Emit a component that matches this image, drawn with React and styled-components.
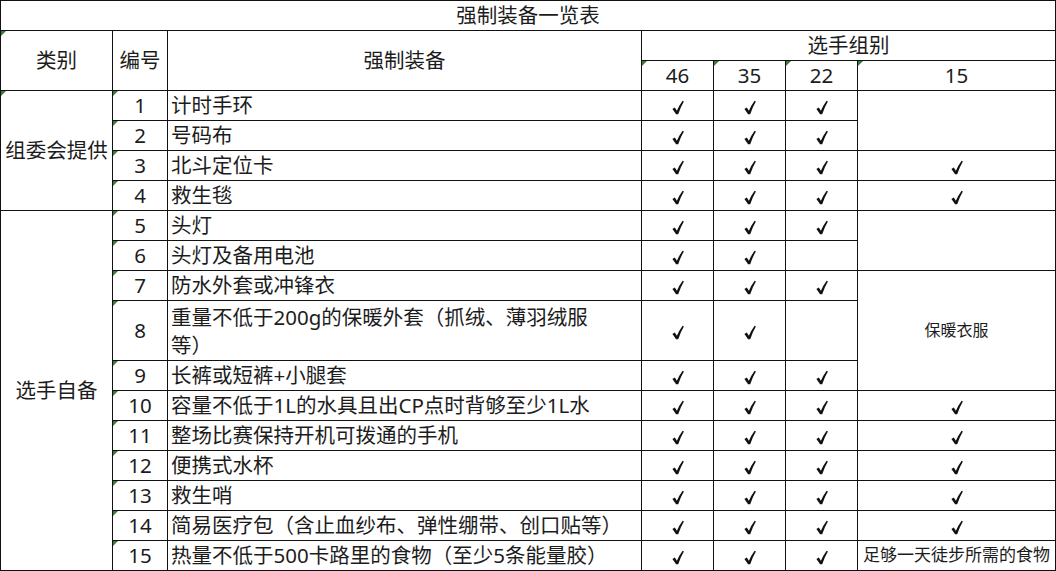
import React from "react";
import styled, { createGlobalStyle } from "styled-components";

const GlobalStyle = createGlobalStyle`
  body {
    margin: 0;
    background: #fff;
  }
`;

const rows = [
  { n: 1, name: "计时手环", c: [1, 1, 1], last: { span: 2 } },
  { n: 2, name: "号码布", c: [1, 1, 1] },
  { n: 3, name: "北斗定位卡", c: [1, 1, 1], last: { check: true } },
  { n: 4, name: "救生毯", c: [1, 1, 1], last: { check: true } },
  { n: 5, name: "头灯", c: [1, 1, 1], last: { span: 2 } },
  { n: 6, name: "头灯及备用电池", c: [1, 1, 0] },
  { n: 7, name: "防水外套或冲锋衣", c: [1, 1, 1], last: { span: 3, text: "保暖衣服" } },
  { n: 8, name: ["重量不低于200g的保暖外套（抓绒、薄羽绒服", "等）"], c: [1, 1, 0], tall: true },
  { n: 9, name: "长裤或短裤+小腿套", c: [1, 1, 1] },
  { n: 10, name: "容量不低于1L的水具且出CP点时背够至少1L水", c: [1, 1, 1], last: { check: true } },
  { n: 11, name: "整场比赛保持开机可拨通的手机", c: [1, 1, 1], last: { check: true } },
  { n: 12, name: "便携式水杯", c: [1, 1, 1], last: { check: true } },
  { n: 13, name: "救生哨", c: [1, 1, 1], last: { check: true } },
  { n: 14, name: "简易医疗包（含止血纱布、弹性绷带、创口贴等）", c: [1, 1, 1], last: { check: true } },
  { n: 15, name: "热量不低于500卡路里的食物（至少5条能量胶）", c: [1, 1, 1], last: { text: "足够一天徒步所需的食物", small: 17 } },
];

const Check = () => (
  <CheckIcon viewBox="0 0 12 14" aria-hidden="true">
    <path d="M0.4 8.4 L2.8 7 L4.9 10.2 Q7.2 4.8 10.6 0.2 L11.9 1 Q8.6 6.4 6.2 13.7 L4.1 13.7 Z" />
  </CheckIcon>
);

const App = () => {
  return (
    <>
      <GlobalStyle />
      <Sheet>
        <colgroup>
          <col style={{ width: 112 }} />
          <col style={{ width: 55 }} />
          <col style={{ width: 474 }} />
          <col style={{ width: 72 }} />
          <col style={{ width: 72 }} />
          <col style={{ width: 72 }} />
          <col style={{ width: 198 }} />
        </colgroup>
        <tbody>
          <Row>
            <Cell colSpan={7}>强制装备一览表</Cell>
          </Row>
          <Row>
            <Cell rowSpan={2} $marked>类别</Cell>
            <Cell rowSpan={2}>编号</Cell>
            <Cell rowSpan={2}>强制装备</Cell>
            <Cell colSpan={4}>选手组别</Cell>
          </Row>
          <Row>
            <Cell $marked>46</Cell>
            <Cell $marked>35</Cell>
            <Cell $marked>22</Cell>
            <Cell $marked>15</Cell>
          </Row>
          {rows.map((r) => (
            <Row key={r.n} $tall={r.tall}>
              {r.n === 1 && (
                <Cell rowSpan={4} $marked>
                  组委会提供
                </Cell>
              )}
              {r.n === 5 && <Cell rowSpan={11}>选手自备</Cell>}
              <Cell $marked>{r.n}</Cell>
              <Cell $align="left">
                {Array.isArray(r.name) ? (
                  <Wrapped>
                    {r.name[0]}
                    <br />
                    {r.name[1]}
                  </Wrapped>
                ) : (
                  r.name
                )}
              </Cell>
              {r.c.map((v, i) => (
                <Cell key={i}>{v ? <Check /> : null}</Cell>
              ))}
              {r.last && (
                <Cell rowSpan={r.last.span || 1} $size={r.last.small || (r.last.text ? 16 : undefined)}>
                  {r.last.check ? <Check /> : r.last.text || null}
                </Cell>
              )}
            </Row>
          ))}
        </tbody>
      </Sheet>
    </>
  );
};

export default App;

const Sheet = styled.table`
  width: 1056px;
  table-layout: fixed;
  border-collapse: collapse;
  font-family: "Noto Sans", "Noto Sans CJK SC", sans-serif;
  color: #1c1c1c;
`;

const Row = styled.tr`
  height: ${(p) => (p.$tall ? "60px" : "30px")};
`;

const Cell = styled.td`
  position: relative;
  border: 1px solid #111;
  padding: ${(p) => (p.$align === "left" ? "0 0 0 3px" : "0")};
  text-align: ${(p) => p.$align || "center"};
  vertical-align: middle;
  font-size: ${(p) => (p.$size ? `${p.$size}px` : "20.5px")};
  line-height: 1.2;
  white-space: nowrap;
  overflow: hidden;

  &::before {
    content: "";
    display: ${(p) => (p.$marked ? "block" : "none")};
    position: absolute;
    top: 0;
    left: 0;
    width: 0;
    height: 0;
    border-top: 5px solid #3d7a3a;
    border-right: 5px solid transparent;
  }
`;

const Wrapped = styled.span`
  display: block;
  line-height: 28px;
`;

const CheckIcon = styled.svg`
  display: inline-block;
  width: 12px;
  height: 15px;
  vertical-align: middle;
  fill: #111;
`;
